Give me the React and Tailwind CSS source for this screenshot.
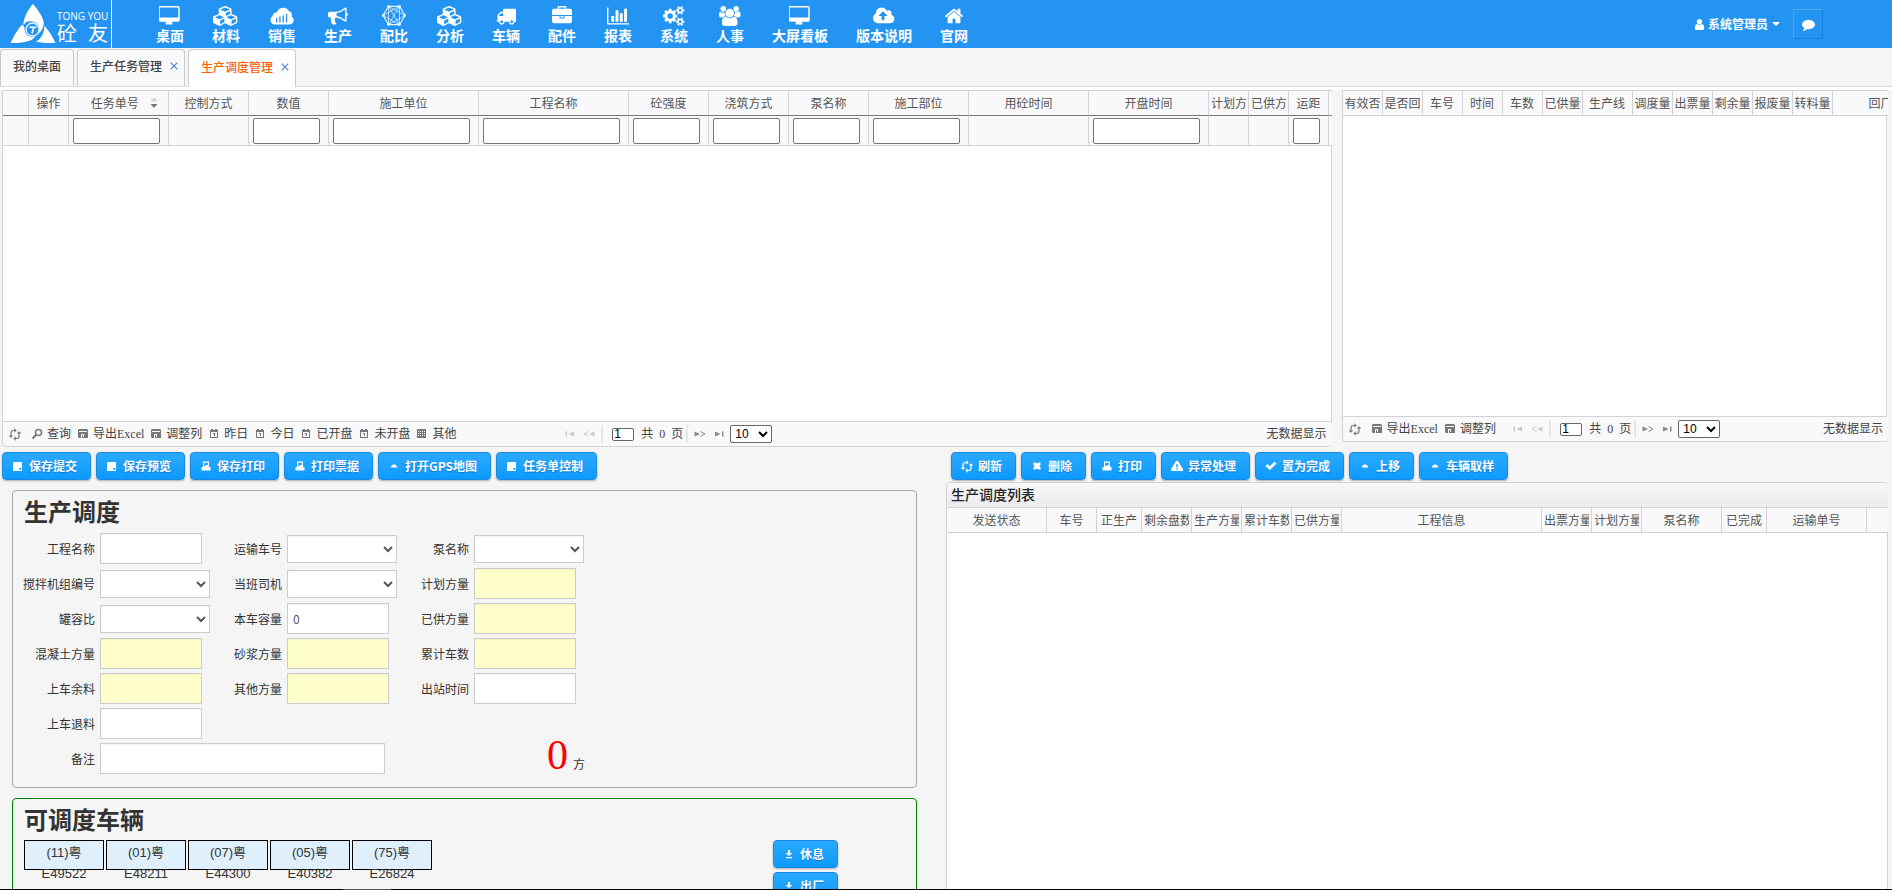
import React from "react";

const GLYPHS = {
  desktop: [1920, "M1728 992v-832q0-13-9.5-22.5t-22.5-9.5h-1600q-13 0-22.5 9.5t-9.5 22.5v832q0 13 9.5 22.5t22.5 9.5h1600q13 0 22.5-9.5t9.5-22.5zm128-832v1088q0 66-47 113t-113 47h-544q0 37 16 77.5t32 71 16 43.5q0 26-19 45t-45 19h-512q-26 0-45-19t-19-45q0-14 16-44t32-70 16-78h-544q-66 0-113-47t-47-113v-1088q0-66 47-113t113-47h1600q66 0 113 47t47 113z"],
  cubes: [2304, "M640 1632l384-192v-314l-384 164v342zm-64-454l404-173-404-173-404 173zm1088 454l384-192v-314l-384 164v342zm-64-454l404-173-404-173-404 173zm-448-293l384-165v-266l-384 164v267zm-64-379l441-189-441-189-441 189zm1088 518v416q0 36-19 67t-52 47l-448 224q-25 14-57 14t-57-14l-448-224q-4-2-7-4-2 2-7 4l-448 224q-25 14-57 14t-57-14l-448-224q-33-16-52-47t-19-67v-416q0-38 21.5-70t56.5-48l434-186v-400q0-38 21.5-70t56.5-48l448-192q23-10 50-10t50 10l448 192q35 16 56.5 48t21.5 70v400l434 186q36 16 57 48t21 70z"],
  bullhorn: [1792, "M1664 640q53 0 90.5 37.5t37.5 90.5-37.5 90.5-90.5 37.5v384q0 52-38 90t-90 38q-417-347-812-380-58 19-91 66t-31 100.5 40 92.5q-20 33-23 65.5t6 58 33.5 55 48 50 61.5 50.5q-29 58-111.5 83t-168.5 11.5-132-55.5q-7-23-29.5-87.5t-32-94.5-23-89-15-101 3.5-98.5 22-110.5h-122q-66 0-113-47t-47-113v-192q0-66 47-113t113-47h480q435 0 896-384 52 0 90 38t38 90v384zm-128 604v-954q-394 302-768 343v270q377 42 768 341z"],
  truck: [1792, "M640 1408q0-52-38-90t-90-38-90 38-38 90 38 90 90 38 90-38 38-90zm-384-512h384v-256h-158q-13 0-22 9l-195 195q-9 9-9 22v30zm1280 512q0-52-38-90t-90-38-90 38-38 90 38 90 90 38 90-38 38-90zm256-1088v1024q0 15-4 26.5t-13.5 18.5-16.5 11.5-23.5 6-22.5 2-25.5 0-22.5-.5q0 106-75 181t-181 75-181-75-75-181h-384q0 106-75 181t-181 75-181-75-75-181h-64q-3 0-22.5.5t-25.5 0-22.5-2-23.5-6-16.5-11.5-13.5-18.5-4-26.5q0-26 19-45t45-19v-320q0-8-.5-35t0-38 2.5-34.5 6.5-37 14-30.5 22.5-30l198-198q19-19 50.5-32t58.5-13h160v-192q0-26 19-45t45-19h1024q26 0 45 19t19 45z"],
  briefcase: [1792, "M640 256h512v-128h-512v128zm1152 640v480q0 66-47 113t-113 47h-1472q-66 0-113-47t-47-113v-480h672v160q0 26 19 45t45 19h320q26 0 45-19t19-45v-160h672zm-768 0v128h-256v-128h256zm768-480v384h-1792v-384q0-66 47-113t113-47h352v-160q0-40 28-68t68-28h576q40 0 68 28t28 68v160h352q66 0 113 47t47 113z"],
  chart: [2048, "M640 896v512h-256v-512h256zm384-512v1024h-256v-1024h256zm1024 1152v128h-2048v-1536h128v1408h1920zm-640-896v768h-256v-768h256zm384-384v1152h-256v-1152h256z"],
  cogs: [1920, "M896 896q0-106-75-181t-181-75-181 75-75 181 75 181 181 75 181-75 75-181zm768 512q0-52-38-90t-90-38-90 38-38 90q0 53 37.5 90.5t90.5 37.5 90.5-37.5 37.5-90.5zm0-1024q0-52-38-90t-90-38-90 38-38 90q0 53 37.5 90.5t90.5 37.5 90.5-37.5 37.5-90.5zm-384 421v185q0 10-7 19.5t-16 10.5l-155 24q-11 35-32 76 34 48 90 115 7 11 7 20 0 12-7 19-23 30-82.5 89.5t-78.5 59.5q-11 0-21-7l-115-90q-37 19-77 31-11 108-23 155-7 24-30 24h-186q-11 0-20-7.5t-10-17.5l-23-153q-34-10-75-31l-118 89q-7 7-20 7-11 0-21-8-144-133-144-160 0-9 7-19 10-14 41-53t47-61q-23-44-35-82l-152-24q-10-1-17-9.5t-7-19.5v-185q0-10 7-19.5t16-10.5l155-24q11-35 32-76-34-48-90-115-7-11-7-20 0-12 7-20 22-30 82-89t79-59q11 0 21 7l115 90q34-18 77-32 11-108 23-154 7-24 30-24h186q11 0 20 7.5t10 17.5l23 153q34 10 75 31l118-89q8-7 20-7 11 0 21 8 144 133 144 160 0 8-7 19-12 16-42 54t-45 60q23 48 34 82l152 23q10 2 17 10.5t7 19.5zm640 533v140q0 16-149 31-12 27-30 52 51 113 51 138 0 4-4 7-122 71-124 71-8 0-46-47t-52-68q-20 2-30 2t-30-2q-14 21-52 68t-46 47q-2 0-124-71-4-3-4-7 0-25 51-138-18-25-30-52-149-15-149-31v-140q0-16 149-31 13-29 30-52-51-113-51-138 0-4 4-7 4-2 35-20t59-34 30-16q8 0 46 46.5t52 67.5q20-2 30-2t30 2q51-71 92-112l6-2q4 0 124 70 4 3 4 7 0 25-51 138 17 23 30 52 149 15 149 31zm0-1024v140q0 16-149 31-12 27-30 52 51 113 51 138 0 4-4 7-122 71-124 71-8 0-46-47t-52-68q-20 2-30 2t-30-2q-14 21-52 68t-46 47q-2 0-124-71-4-3-4-7 0-25 51-138-18-25-30-52-149-15-149-31v-140q0-16 149-31 13-29 30-52-51-113-51-138 0-4 4-7 4-2 35-20t59-34 30-16q8 0 46 46.5t52 67.5q20-2 30-2t30 2q51-71 92-112l6-2q4 0 124 70 4 3 4 7 0 25-51 138 17 23 30 52 149 15 149 31z"],
  users: [1920, "M593 896q-162 5-265 128h-134q-82 0-138-40.5t-56-118.5q0-353 124-353 6 0 43.5 21t97.5 42.5 119 21.5q67 0 133-23-5 37-5 66 0 159 93 293zm1071 637q0 120-73 189.5t-194 69.5h-874q-121 0-194-69.5t-73-189.5q0-53 3.5-103.5t14-109 26.5-108.5 43-97.5 62-81 85.5-53.5 111.5-20q10 0 43 21.5t73 48 107 48 135 21.5 135-21.5 107-48 73-48 43-21.5q61 0 111.5 20t85.5 53.5 62 81 43 97.5 26.5 108.5 14 109 3.5 103.5zm-1024-1277q0 106-75 181t-181 75-181-75-75-181 75-181 181-75 181 75 75 181zm704 384q0 159-112.5 271.5t-271.5 112.5-271.5-112.5-112.5-271.5 112.5-271.5 271.5-112.5 271.5 112.5 112.5 271.5zm576 225q0 78-56 118.5t-138 40.5h-134q-103-123-265-128 93-134 93-293 0-29-5-66 66 23 133 23 59 0 119-21.5t97.5-42.5 43.5-21q124 0 124 353zm-128-609q0 106-75 181t-181 75-181-75-75-181 75-181 181-75 181 75 75 181z"],
  cloudUp: [1920, "M1280 864q0-14-9-23l-352-352q-9-9-23-9t-23 9l-351 351q-10 12-10 24 0 14 9 23t23 9h224v352q0 13 9.5 22.5t22.5 9.5h192q13 0 22.5-9.5t9.5-22.5v-352h224q13 0 22.5-9.5t9.5-22.5zm640 288q0 159-112.5 271.5t-271.5 112.5h-1088q-185 0-316.5-131.5t-131.5-316.5q0-130 70-240t188-165q-2-30-2-43 0-212 150-362t362-150q156 0 285.5 87t188.5 231q71-62 166-62 106 0 181 75t75 181q0 76-41 138 130 31 213.5 135.5t83.5 238.5z"],
  home: [1792, "M1472 992v480q0 26-19 45t-45 19h-384v-384h-256v384h-384q-26 0-45-19t-19-45v-480q0-1 .5-3t.5-3l575-474 575 474q1 2 1 6zm223-69l-62 74q-8 9-21 11h-3q-13 0-21-7l-692-577-692 577q-12 8-24 7-13-2-21-11l-62-74q-8-10-7-23.5t11-21.5l719-599q32-26 76-26t76 26l244 204v-195q0-14 9-23t23-9h192q14 0 23 9t9 23v408l219 182q10 8 11 21.5t-7 23.5z"],
  user: [1792, "M1536 1399q0 109-62.5 187t-150.5 78h-854q-88 0-150.5-78t-62.5-187q0-85 8.5-160.5t31.5-152 58.5-131 94-89 134.5-34.5q131 128 313 128t313-128q76 0 134.5 34.5t94 89 58.5 131 31.5 152 8.5 160.5zm-256-887q0 159-112.5 271.5t-271.5 112.5-271.5-112.5-112.5-271.5 112.5-271.5 271.5-112.5 271.5 112.5 112.5 271.5z"],
  comment: [1792, "M1792 896q0 174-120 321.5t-326 233-450 85.5q-70 0-145-8-198 175-460 242-49 14-114 22-17 2-30.5-9t-17.5-29v-1q-3-4-.5-12t2-10 4.5-9.5l6-9 7-8.5 8-9q7-8 31-34.5t34.5-38 31-39.5 32.5-51 27-59 26-76q-157-89-247.5-220t-90.5-281q0-130 71-248.5t191-204.5 286-136.5 348-50.5 348 50.5 286 136.5 191 204.5 71 248.5z"],
};

function Glyph({ name, className = "h-5" }) {
  const [w, d] = GLYPHS[name];
  return (
    <svg viewBox={`0 0 ${w} 1792`} fill="currentColor" className={className} aria-hidden="true">
      <path d={d} />
    </svg>
  );
}

function CloudBars() {
  return (
    <svg viewBox="0 0 24 20" className="h-5" aria-hidden="true">
      <path fill="#fff" d="M4.500 18.500A4.500 4.500 0 0 1 2.600 10.200A4.300 4.300 0 0 1 7 6.200A6.500 6.500 0 0 1 18.800 5A4.500 4.500 0 0 1 21.600 10.500A4.300 4.300 0 0 1 19.500 18.500Z" />
      <path fill="#2494f2" d="M6 12h1.300v4.500H6zM9.300 10.500h1.300v6H9.300zM12.600 9.500h1.300v7h-1.300zM15.900 8h1.300v8.500h-1.300z" />
    </svg>
  );
}

function HexNet() {
  return (
    <svg viewBox="0 0 24 21" className="h-[21px]" fill="none" stroke="#e4f2ff" strokeWidth="0.8" aria-hidden="true">
      <path strokeWidth="1.200" d="M6.500 1.300h11L23 10.500l-5.500 9.200h-11L1 10.500z" />
      <path d="M6.500 1.300L17.500 19.700M17.500 1.300L6.500 19.700M1 10.500L17.500 1.300M23 10.500L6.500 1.300M1 10.500l16.500 9.200M23 10.500L6.500 19.700M6.500 1.300v18.400M17.500 1.300v18.400" />
      <g fill="#fff" stroke="none">
        <circle cx="6.500" cy="1.500" r="1.300" /><circle cx="17.500" cy="1.500" r="1.300" /><circle cx="22.700" cy="10.500" r="1.300" />
        <circle cx="17.500" cy="19.500" r="1.300" /><circle cx="6.500" cy="19.500" r="1.300" /><circle cx="1.300" cy="10.500" r="1.300" />
      </g>
    </svg>
  );
}

function Logo() {
  return (
    <div className="flex h-full items-center gap-px">
      <svg viewBox="0 0 46 40" className="h-10 w-[46px]" aria-hidden="true">
        <path fill="#fff" d="M23 0C25 2 32 11 33.500 17C34.500 22 32 27 28 30C31 24 29 19 23 17.500C18 16.500 15 18 13.500 21.500C12.500 15 19 4 23 0Z" />
        <path fill="#fff" d="M11 21.500C13 20.500 14.500 22 14.500 25C15 31 19 34 25.500 32.500C22 37 14 39.500 0.500 39Q5 29 11 21.500Z" />
        <path fill="#fff" d="M34.500 21.500Q41 29 45.500 39C38 39.300 31 39 26 37.500C31 35 34.500 29 34.500 21.500Z" />
        <circle cx="22.500" cy="25.500" r="6.500" fill="none" stroke="#fff" strokeWidth="1.300" />
        <path fill="none" stroke="#fff" strokeWidth="1.600" d="M19.500 23.300h7M23.700 23.500l-1.700 6" />
      </svg>
      <div className="flex h-full items-center border-r border-white pr-[3px] text-white">
        <div className="w-[51px]">
          <div className="pt-[5px] font-['Open_Sans',sans-serif] text-[10px] leading-3 whitespace-nowrap">TONG YOU</div>
          <div className="flex justify-between text-xl leading-[21px]"><span>砼</span><span>友</span></div>
        </div>
      </div>
    </div>
  );
}

const NAV = [
  ["桌面", "desktop"], ["材料", "cubes"], ["销售", "cloudBars"], ["生产", "bullhorn"], ["配比", "hex"],
  ["分析", "cubes"], ["车辆", "truck"], ["配件", "briefcase"], ["报表", "chart"], ["系统", "cogs"],
  ["人事", "users"], ["大屏看板", "desktop"], ["版本说明", "cloudUp"], ["官网", "home"],
];

function Header() {
  return (
    <header className="flex h-12 shrink-0 items-stretch bg-[#2494f2] pl-[10px] text-white">
      <Logo />
      <nav className="ml-[30px] flex">
        {NAV.map(([label, icon]) => (
          <a key={label} href="#" className="flex flex-col items-center px-[14px] pt-[6px] text-sm leading-5 font-bold whitespace-nowrap">
            <span className="flex h-[19px] items-center">
              {icon === "cloudBars" ? <CloudBars /> : icon === "hex" ? <HexNet /> : <Glyph name={icon} />}
            </span>
            {label}
          </a>
        ))}
      </nav>
      <div className="ml-auto flex items-center gap-[13px] pr-[69px]">
        <button type="button" className="flex items-center gap-[2px] text-xs font-bold">
          <Glyph name="user" className="h-[13px]" />
          系统管理员
          <svg viewBox="0 0 8 4" className="ml-[2px] h-1 w-2" aria-hidden="true"><path fill="#fff" d="M0 0h8L4 4z" /></svg>
        </button>
        <button type="button" aria-label="消息" className="flex h-[30px] w-[30px] items-center justify-center border border-t-[#4fa8ef] border-r-[#1b80d8] border-b-[#1b80d8] border-l-[#4fa8ef]">
          <Glyph name="comment" className="h-[13px]" />
        </button>
      </div>
    </header>
  );
}

function Close() {
  return (
    <svg viewBox="0 0 8 8" className="h-2 w-2" stroke="#4f86c6" strokeWidth="1.200" aria-hidden="true">
      <path d="M.7.7l6.600 6.600M7.300.7L.7 7.300" />
    </svg>
  );
}

function Tabs() {
  const tab = "flex items-center gap-2 rounded-t-sm border border-b-0 pb-1 pl-3 text-xs font-medium";
  return (
    <div className="flex h-[39px] shrink-0 items-stretch gap-[3px] border-b border-[#ddd] pt-px">
      <a href="#" className={`${tab} border-[#ccc] bg-[#f9f9fb] pr-3 text-[#444]`}>我的桌面</a>
      <a href="#" className={`${tab} border-[#ccc] bg-[#f9f9fb] pr-[6px] text-[#444]`}>生产任务管理<Close /></a>
      <a href="#" className={`${tab} -mb-px border-[#ccc] bg-white pr-[6px] text-[#ff6000]`}>生产调度管理<Close /></a>
    </div>
  );
}

/* 16px line-art used in grid footers and toolbar buttons */
function Mini({ name }) {
  const shapes = {
    refresh: <g fill="none" stroke="currentColor" strokeWidth="1.200"><path d="M8.500 4.500H6.500Q4 4.500 4 7v4M7.500 12.500h2Q12 12.500 12 10V6" /><path d="M7.500 2.500v4l2-2zM8.500 10.500v4l-2-2z" fill="currentColor" strokeWidth=".3" /><path d="M2.500 9.500L4 11l1.500-1.500M10.500 7.500L12 6l1.500 1.500" /></g>,
    search: <g fill="none" stroke="currentColor" strokeWidth="1.500"><circle cx="9.500" cy="6.500" r="3" /><path strokeWidth="2" d="M7 9L3.500 12.500" /></g>,
    disk: <path fill="currentColor" fillRule="evenodd" d="M4 3h8l1 1v8H4L3 11V4zM4 5v1h8V5zM6 8v4h1V9h1v2h1V8z" />,
    date: <path fill="currentColor" fillRule="evenodd" d="M4 4h1V3h2v1h2V3h2v1h1v8H4zM5 6v5h6V6zM7 7h2v3H8V8H7z" />,
    grid: <path fill="currentColor" fillRule="evenodd" d="M3 3h9v9H3zM4 5v1h1V5zm2 0v1h1V5zm2 0v1h1V5zm2 0v1h1V5zM4 7v1h1V7zm2 0v1h1V7zm2 0v1h1V7zm2 0v1h1V7zM4 9v1h1V9zm2 0v1h1V9zm2 0v1h1V9zm2 0v1h1V9z" />,
    first: <path fill="currentColor" d="M3.500 5.500h1.500v5H3.500zM12 5.500v5L6.500 8z" />,
    prev: <g><path fill="currentColor" d="M13.500 5.500v5L8 8z" /><path fill="none" stroke="currentColor" d="M7.500 5.500L3 8l4.500 2.500" /></g>,
    next: <g><path fill="currentColor" d="M2.500 5.500v5L8 8z" /><path fill="none" stroke="currentColor" d="M8.500 5.500L13 8l-4.500 2.500" /></g>,
    last: <path fill="currentColor" d="M11 5.500h1.500v5H11zM4 5.500v5L9.500 8z" />,
    note: <path fill="currentColor" fillRule="evenodd" d="M3 4h9v9H3zM9 10v1h1v1h1v-2z" />,
    print: <path fill="currentColor" fillRule="evenodd" d="M5 3.500h6v5.500h1.500v3.500h-9V9H5zM6.200 4.700v3.500h1.500V7.000h2.200V4.700z" />,
    up: <path fill="currentColor" d="M4.500 9.500Q5.500 6.500 8 6.200Q10.500 6.500 11.500 9.500z" />,
    x: <path fill="currentColor" d="M4.500 4.500h2L8 5.500l1.500-1h2v2.200L10.300 8l1.200 1.300v2.200h-2L8 10.500l-1.500 1h-2V9.300L5.700 8 4.500 6.700z" />,
    alert: <path fill="currentColor" fillRule="evenodd" d="M7 3h2l5 8v2H2v-2zM7.300 6v3.500h1.400V6zM7.300 10.500v1.200h1.400v-1.200z" />,
    check: <path fill="currentColor" d="M2.500 8l2-2 2.200 2.200L11.500 3.500l2 2-6.700 6.700z" />,
    download: <path fill="currentColor" d="M7 4h2v3h2.500L8 10 4.500 7H7zM5 11h6v1.300H5z" />,
  };
  return <svg viewBox="0 0 16 16" className="h-4 w-4 shrink-0" aria-hidden="true">{shapes[name]}</svg>;
}

function HeadRow({ cols, line }) {
  return (
    <tr>
      {cols.map(([label, , , sorted], i) => (
        <th key={i} scope="col" className={`h-[25px] overflow-hidden border-r border-b border-r-[#d3d3d3] px-[2px] pb-px text-center font-normal whitespace-nowrap last:border-r-0 ${line}`}>
          <span className={`flex h-5 items-center gap-1 overflow-hidden ${sorted ? "pl-3" : ""}`}>
            <span className="mx-auto min-w-0 overflow-hidden">{label}</span>
            {sorted && (
              <svg viewBox="0 0 8 12" className="mr-auto h-3 w-2 shrink-0" aria-hidden="true"><path fill="#d3d3d3" d="M0 4.500h8L4 .5z" /><path fill="#777" d="M.5 7h7L4 11z" /></svg>
            )}
          </span>
        </th>
      ))}
    </tr>
  );
}

function Cols({ cols }) {
  return <colgroup>{cols.map(([, w], i) => <col key={i} className={w} />)}</colgroup>;
}

const TASK_COLS = [
  ["", "w-[26px]"], ["操作", "w-[40px]"], ["任务单号", "w-[100px]", true, true], ["控制方式", "w-[80px]"],
  ["数值", "w-[80px]", true], ["施工单位", "w-[150px]", true], ["工程名称", "w-[150px]", true], ["砼强度", "w-[80px]", true],
  ["浇筑方式", "w-[80px]", true], ["泵名称", "w-[80px]", true], ["施工部位", "w-[100px]", true], ["用砼时间", "w-[120px]"],
  ["开盘时间", "w-[120px]", true], ["计划方", "w-[40px]"], ["已供方", "w-[40px]"], ["运距", "w-[40px]", true], ["", "w-auto"],
];
const TRIP_COLS = [
  ["有效否", "w-[40px]"], ["是否回", "w-[40px]"], ["车号", "w-[40px]"], ["时间", "w-[40px]"], ["车数", "w-[40px]"],
  ["已供量", "w-[40px]"], ["生产线", "w-[50px]"], ["调度量", "w-[40px]"], ["出票量", "w-[40px]"], ["剩余量", "w-[40px]"],
  ["报废量", "w-[40px]"], ["转料量", "w-[40px]"], ["回厂时间", "w-[120px]"],
];
const LIST_COLS = [
  ["发送状态", "w-[100px]"], ["车号", "w-[50px]"], ["正生产", "w-[45px]"], ["剩余盘数", "w-[50px]"], ["生产方量", "w-[50px]"],
  ["累计车数", "w-[50px]"], ["已供方量", "w-[50px]"], ["工程信息", "w-[200px]"], ["出票方量", "w-[50px]"], ["计划方量", "w-[50px]"],
  ["泵名称", "w-[80px]"], ["已完成", "w-[45px]"], ["运输单号", "w-[100px]"], ["", "w-auto"],
];

function Pager({ id, actions }) {
  return (
    <div className="grid h-6 grid-cols-[1fr_auto_1fr] items-center font-['Liberation_Serif','Noto_Sans_CJK_SC',serif] text-xs text-[#444]">
      <div className="flex items-center gap-1 pl-[3px]">
        <button type="button" aria-label="刷新列表" className="mr-[2px] pl-px text-[#777]"><Mini name="refresh" /></button>
        {actions.map(([label, icon]) => (
          <button key={label} type="button" className="flex items-center gap-[2px] whitespace-nowrap">
            <span className="text-[#777]"><Mini name={icon} /></span>{label}
          </button>
        ))}
      </div>
      <div className="flex items-center">
        <button type="button" disabled aria-label="首页" className="mr-[3px] text-[#c8c8c8]"><Mini name="first" /></button>
        <button type="button" disabled aria-label="上一页" className="text-[#c8c8c8]"><Mini name="prev" /></button>
        <span className="mr-[9px] ml-1 h-[18px] w-[2px] bg-[#e6e6e6]" />
        <input aria-label="页码" defaultValue="1" className="h-[13px] w-[22px] rounded-xs border border-[#666] bg-white px-px font-['Liberation_Sans',sans-serif] leading-3 text-black" />
        <span className="mr-[3px] ml-[7px] flex gap-[6px]"><span>共</span><span>0</span><span>页</span></span>
        <span className="mr-1 h-[18px] w-[2px] bg-[#e6e6e6]" />
        <button type="button" aria-label="下一页" className="mr-[3px] text-[#888]"><Mini name="next" /></button>
        <button type="button" aria-label="末页" className="mr-[3px] text-[#888]"><Mini name="last" /></button>
        <select aria-label="每页条数" id={id} className="h-[18px] w-[42px] rounded-xs border border-[#666] bg-white font-['Liberation_Sans',sans-serif] leading-4 text-black">
          <option>10</option><option>20</option><option>50</option>
        </select>
      </div>
      <div className="pr-[5px] text-right">无数据显示</div>
    </div>
  );
}

const TABLE = "table-fixed border-separate border-spacing-0 bg-[#f9f9fb] text-xs text-[#555]";

function TaskGrid() {
  return (
    <section className="ml-[2px] min-w-0 flex-[1330] overflow-hidden rounded-b-sm border border-r-0 border-[#d3d3d3] bg-[#f9f9fb]">
      <div className="overflow-hidden">
        <table className={`${TABLE} w-full min-w-[1329px]`}>
          <Cols cols={TASK_COLS} />
          <thead>
            <HeadRow cols={TASK_COLS} line="border-b-[#777]" />
            <tr>
              {TASK_COLS.map(([label, , filter], i) => (
                <td key={i} className="h-[30px] border-r border-b border-[#d3d3d3] pr-2 pl-1 last:border-r-0">
                  {filter && <input aria-label={`筛选${label}`} className="block h-[26px] w-full rounded-xs border border-[#767676] bg-white px-1" />}
                </td>
              ))}
            </tr>
          </thead>
        </table>
      </div>
      <div className="h-[276px] border-r border-b border-[#d3d3d3] bg-white" />
      <Pager
        id="task-size"
        actions={[["查询", "search"], ["导出Excel", "disk"], ["调整列", "disk"], ["昨日", "date"], ["今日", "date"], ["已开盘", "date"], ["未开盘", "date"], ["其他", "grid"]]}
      />
    </section>
  );
}

function TripGrid() {
  return (
    <section className="mr-1 ml-[10px] min-w-0 flex-[546] self-start overflow-hidden rounded-b-sm border border-r-0 border-[#d3d3d3] bg-[#f9f9fb]">
      <div className="overflow-hidden">
        <table className={`${TABLE} w-[610px] min-w-full`}>
          <Cols cols={TRIP_COLS} />
          <thead><HeadRow cols={TRIP_COLS} line="border-b-[#d3d3d3]" /></thead>
        </table>
      </div>
      <div className="mr-px h-[301px] border-r border-b border-[#d3d3d3] bg-white" />
      <Pager id="trip-size" actions={[["导出Excel", "disk"], ["调整列", "disk"]]} />
    </section>
  );
}

function ToolButton({ icon, children }) {
  return (
    <button type="button" className="flex h-7 items-center gap-[3px] rounded-sm border border-[#1a8ae0] bg-linear-to-b from-[#2aaaff] to-[#0a9aff] pr-[13px] pb-px pl-[7px] text-xs font-bold whitespace-nowrap text-white shadow-[0_1px_2px_rgba(0,0,0,0.3)] text-shadow-[0_1px_1px_rgba(0,80,160,0.5)]">
      <Mini name={icon} />
      {children}
    </button>
  );
}

const CONTROL = "border border-[#ccc] text-xs text-[#555] shadow-[inset_0_1px_1px_rgba(0,0,0,0.05)]";

const FIELDS = [
  ["工程名称", "text"], ["运输车号", "select"], ["泵名称", "select"],
  ["搅拌机组编号", "select"], ["当班司机", "select"], ["计划方量", "calc"],
  ["罐容比", "select"], ["本车容量", "text", "0"], ["已供方量", "calc"],
  ["混凝土方量", "calc"], ["砂浆方量", "calc"], ["累计车数", "calc"],
  ["上车余料", "calc"], ["其他方量", "calc"], ["出站时间", "text"],
  ["上车退料", "text"],
];

function Field({ label, kind, value }) {
  return (
    <>
      <label htmlFor={label} className="text-right text-xs whitespace-nowrap">{label}</label>
      {kind === "select" ? (
        <select id={label} className={`${CONTROL} h-7 w-[110px] bg-white`} />
      ) : (
        <input id={label} readOnly={kind === "calc"} defaultValue={value} className={`${CONTROL} h-[31px] w-[102px] px-[5px] ${kind === "calc" ? "bg-[#ffffcc]" : "bg-white"}`} />
      )}
    </>
  );
}

function DispatchForm() {
  return (
    <section className="mt-[10px] mr-[29px] ml-3 rounded border border-[#aaa] pb-[11px] pl-[10px] text-[#333]">
      <h2 className="pt-1 pl-px text-2xl leading-8 font-bold">生产调度</h2>
      <form className="mt-1 grid w-fit auto-rows-[35px] grid-cols-[72px_105px_72px_105px_72px_105px] items-center gap-x-[5px]">
        {FIELDS.map(([label, kind, value]) => <Field key={label} label={label} kind={kind} value={value} />)}
        <div className="col-span-4" />
        <label htmlFor="remark" className="text-right text-xs">备注</label>
        <input id="remark" className={`${CONTROL} col-span-3 h-[31px] w-[285px] bg-white px-[5px]`} />
        <p className="col-span-2 flex items-baseline gap-[5px] pb-2 pl-[150px] text-xs whitespace-nowrap">
          <span className="font-['Liberation_Serif',serif] text-[42px] leading-9 text-[#ff0000]">0</span>方
        </p>
      </form>
    </section>
  );
}

const VEHICLES = [["(11)粤", "E49522"], ["(01)粤", "E48211"], ["(07)粤", "E44300"], ["(05)粤", "E40382"], ["(75)粤", "E26824"]];

function Vehicles() {
  return (
    <section className="mt-[10px] mr-[29px] ml-3 min-h-[120px] rounded border border-[#008000] pl-[11px] text-[#333]">
      <h2 className="pt-1 text-2xl leading-8 font-bold">可调度车辆</h2>
      <div className="mt-[5px] flex justify-between pr-[78px]">
        <ul className="flex flex-wrap gap-[2px]">
          {VEHICLES.map(([seat, plate]) => (
            <li key={plate} className="h-[30px] w-20 border border-black bg-[#dfeffc] pt-px text-center font-['Liberation_Sans','Noto_Sans_CJK_SC',sans-serif] text-[13px] leading-[21px]">
              {seat}<br />{plate}
            </li>
          ))}
        </ul>
        <div className="flex flex-col gap-1">
          <ToolButton icon="download">休息</ToolButton>
          <ToolButton icon="download">出厂</ToolButton>
        </div>
      </div>
    </section>
  );
}

function DispatchList() {
  return (
    <section className="mt-[2px] mr-1 flex min-h-0 flex-1 flex-col overflow-hidden rounded-t-sm border-t border-l border-[#d3d3d3]">
      <h3 className="h-[25px] border-b border-[#d3d3d3] bg-linear-to-b from-[#f7f7f9] to-[#ebebee] pl-1 text-sm leading-[22px] font-medium text-[#222]">生产调度列表</h3>
      <div className="shrink-0 overflow-hidden">
        <table className={`${TABLE} w-full min-w-[941px]`}>
          <Cols cols={LIST_COLS} />
          <thead><HeadRow cols={LIST_COLS} line="border-b-[#d3d3d3]" /></thead>
        </table>
      </div>
      <div className="flex-1 border-r border-[#d3d3d3] bg-white" />
    </section>
  );
}

export default function App() {
  return (
    <div className="flex h-screen flex-col overflow-hidden bg-[#f5f5f5] font-['Noto_Sans_CJK_SC',sans-serif]">
      <Header />
      <Tabs />
      <main className="flex min-h-0 flex-1 flex-col overflow-hidden">
        <div className="h-[3px] shrink-0 bg-white" />
        <div className="flex shrink-0">
          <TaskGrid />
          <TripGrid />
        </div>
        <div className="flex min-h-0 flex-1 pt-[5px]">
          <div className="min-w-0 flex-1">
            <div className="flex gap-[5px] pl-[2px]">
              <ToolButton icon="note">保存提交</ToolButton>
              <ToolButton icon="note">保存预览</ToolButton>
              <ToolButton icon="print">保存打印</ToolButton>
              <ToolButton icon="print">打印票据</ToolButton>
              <ToolButton icon="up">打开GPS地图</ToolButton>
              <ToolButton icon="note">任务单控制</ToolButton>
            </div>
            <DispatchForm />
            <Vehicles />
          </div>
          <div className="flex min-w-0 flex-1 flex-col">
            <div className="flex gap-[5px] pl-[5px]">
              <ToolButton icon="refresh">刷新</ToolButton>
              <ToolButton icon="x">删除</ToolButton>
              <ToolButton icon="print">打印</ToolButton>
              <ToolButton icon="alert">异常处理</ToolButton>
              <ToolButton icon="check">置为完成</ToolButton>
              <ToolButton icon="up">上移</ToolButton>
              <ToolButton icon="up">车辆取样</ToolButton>
            </div>
            <DispatchList />
          </div>
        </div>
      </main>
      <footer className="flex h-px shrink-0 bg-black"><span className="ml-[343px] w-12 bg-[#555]" /></footer>
    </div>
  );
}
